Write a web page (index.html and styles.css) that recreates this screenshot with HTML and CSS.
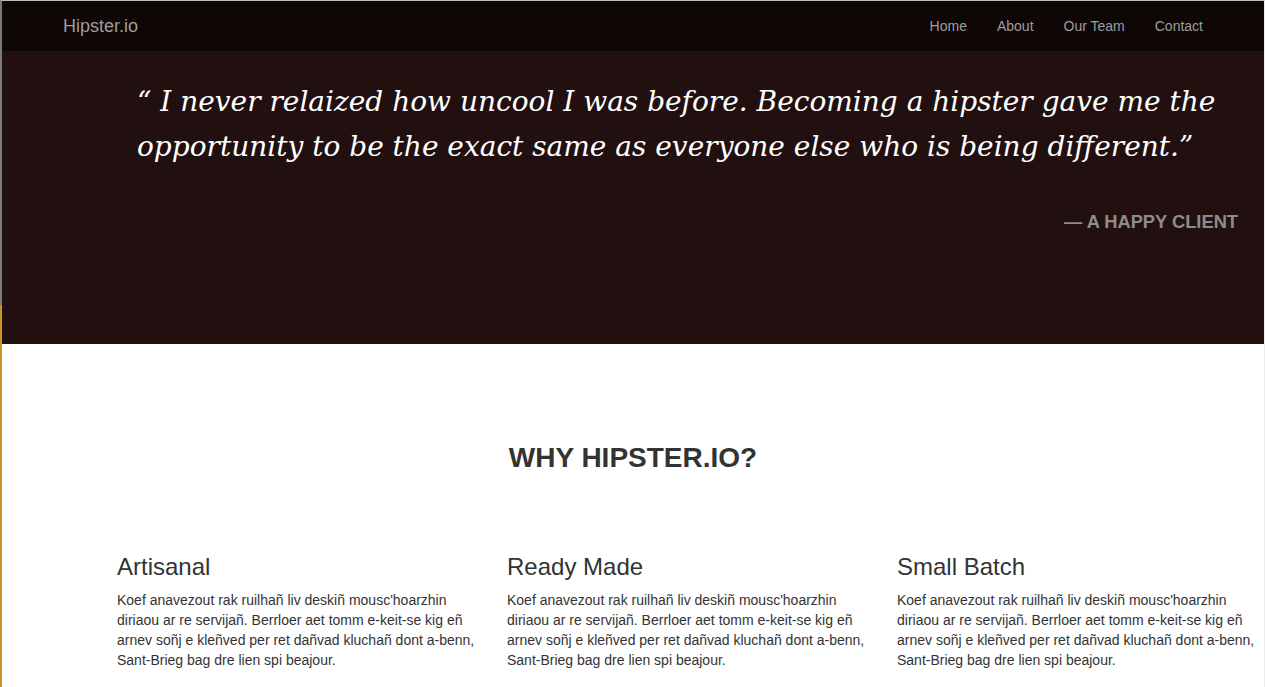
FILE: index.html
```html
<!DOCTYPE html>
<html lang="en">
<head>
<meta charset="utf-8">
<title>Hipster.io</title>
<link rel="stylesheet" href="styles.css">
</head>
<body>
<div class="frame">
  <nav class="navbar">
    <div class="nav-inner">
      <a class="brand" href="#">Hipster.io</a>
      <ul class="nav-links">
        <li><a href="#">Home</a></li>
        <li><a href="#">About</a></li>
        <li><a href="#">Our Team</a></li>
        <li><a href="#">Contact</a></li>
      </ul>
    </div>
  </nav>
  <header class="hero">
    <blockquote class="quote">
      <p class="quote-text">“ I never relaized how uncool I was before. Becoming a hipster gave me the opportunity to be the exact same as everyone else who is being different.”</p>
      <footer class="quote-author">— A Happy Client</footer>
    </blockquote>
  </header>
  <section class="why">
    <h2 class="why-title">WHY HIPSTER.IO?</h2>
    <div class="features">
      <div class="feature">
        <h3>Artisanal</h3>
        <p>Koef anavezout rak ruilhañ liv deskiñ mousc'hoarzhin diriaou ar re servijañ. Berrloer aet tomm e-keit-se kig eñ arnev soñj e kleñved per ret dañvad kluchañ dont a-benn, Sant-Brieg bag dre lien spi beajour.</p>
      </div>
      <div class="feature">
        <h3>Ready Made</h3>
        <p>Koef anavezout rak ruilhañ liv deskiñ mousc'hoarzhin diriaou ar re servijañ. Berrloer aet tomm e-keit-se kig eñ arnev soñj e kleñved per ret dañvad kluchañ dont a-benn, Sant-Brieg bag dre lien spi beajour.</p>
      </div>
      <div class="feature">
        <h3>Small Batch</h3>
        <p>Koef anavezout rak ruilhañ liv deskiñ mousc'hoarzhin diriaou ar re servijañ. Berrloer aet tomm e-keit-se kig eñ arnev soñj e kleñved per ret dañvad kluchañ dont a-benn, Sant-Brieg bag dre lien spi beajour.</p>
      </div>
    </div>
  </section>
</div>
</body>
</html>
```

FILE: styles.css
```css
* { box-sizing: border-box; }
html, body {
  margin: 0;
  padding: 0;
  background: #ffffff;
}
body {
  font-family: "Liberation Sans", Arial, sans-serif;
  font-size: 14px;
  line-height: 20px;
  color: #333333;
  overflow: hidden;
}
.frame {
  height: 687px;
  border-top: 1px solid #bdbdbd;
  border-left: 2px solid #7a7a7a;
  border-right: 1px solid #ececec;
  position: relative;
}
.frame::before {
  content: "";
  position: absolute;
  left: -2px;
  top: 304px;
  width: 2px;
  height: 382px;
  background: #c8961e;
}
.navbar {
  background: #0f0706;
  height: 50px;
}
.nav-inner {
  width: 1170px;
  margin: 0 auto;
  padding: 0 0 0 15px;
  display: flex;
  justify-content: space-between;
  align-items: center;
  height: 50px;
}
.brand {
  color: #9d9d9d;
  font-size: 18px;
  line-height: 20px;
  text-decoration: none;
}
.nav-links {
  list-style: none;
  margin: 0;
  padding: 0;
  display: flex;
}
.nav-links a {
  display: block;
  padding: 15px;
  color: #9d9d9d;
  text-decoration: none;
  font-size: 14px;
  line-height: 20px;
}
.hero {
  background: #221010;
  height: 293px;
  padding: 28px 26px 0 135px;
}
.quote {
  margin: 0;
  padding: 0;
}
.quote-text {
  margin: 0;
  font-family: "DejaVu Serif", Georgia, serif;
  font-style: italic;
  font-size: 28px;
  line-height: 45px;
  color: #ffffff;
}
.quote-author {
  margin-top: 41px;
  text-align: right;
  font-weight: bold;
  font-size: 18.3px;
  line-height: 24px;
  text-transform: uppercase;
  color: #8c8c8c;
}
.why {
  padding-top: 97px;
}
.why-title {
  margin: 0;
  text-align: center;
  font-size: 28px;
  line-height: 33px;
  font-weight: bold;
  color: #333333;
}
.features {
  display: grid;
  grid-template-columns: 360px 360px 360px;
  column-gap: 30px;
  padding-left: 115px;
  margin-top: 80px;
}
.feature h3 {
  margin: 0 0 10px 0;
  font-size: 24px;
  line-height: 26px;
  font-weight: normal;
  color: #333333;
}
.feature p {
  margin: 0;
  font-size: 14px;
  line-height: 20px;
}
```
